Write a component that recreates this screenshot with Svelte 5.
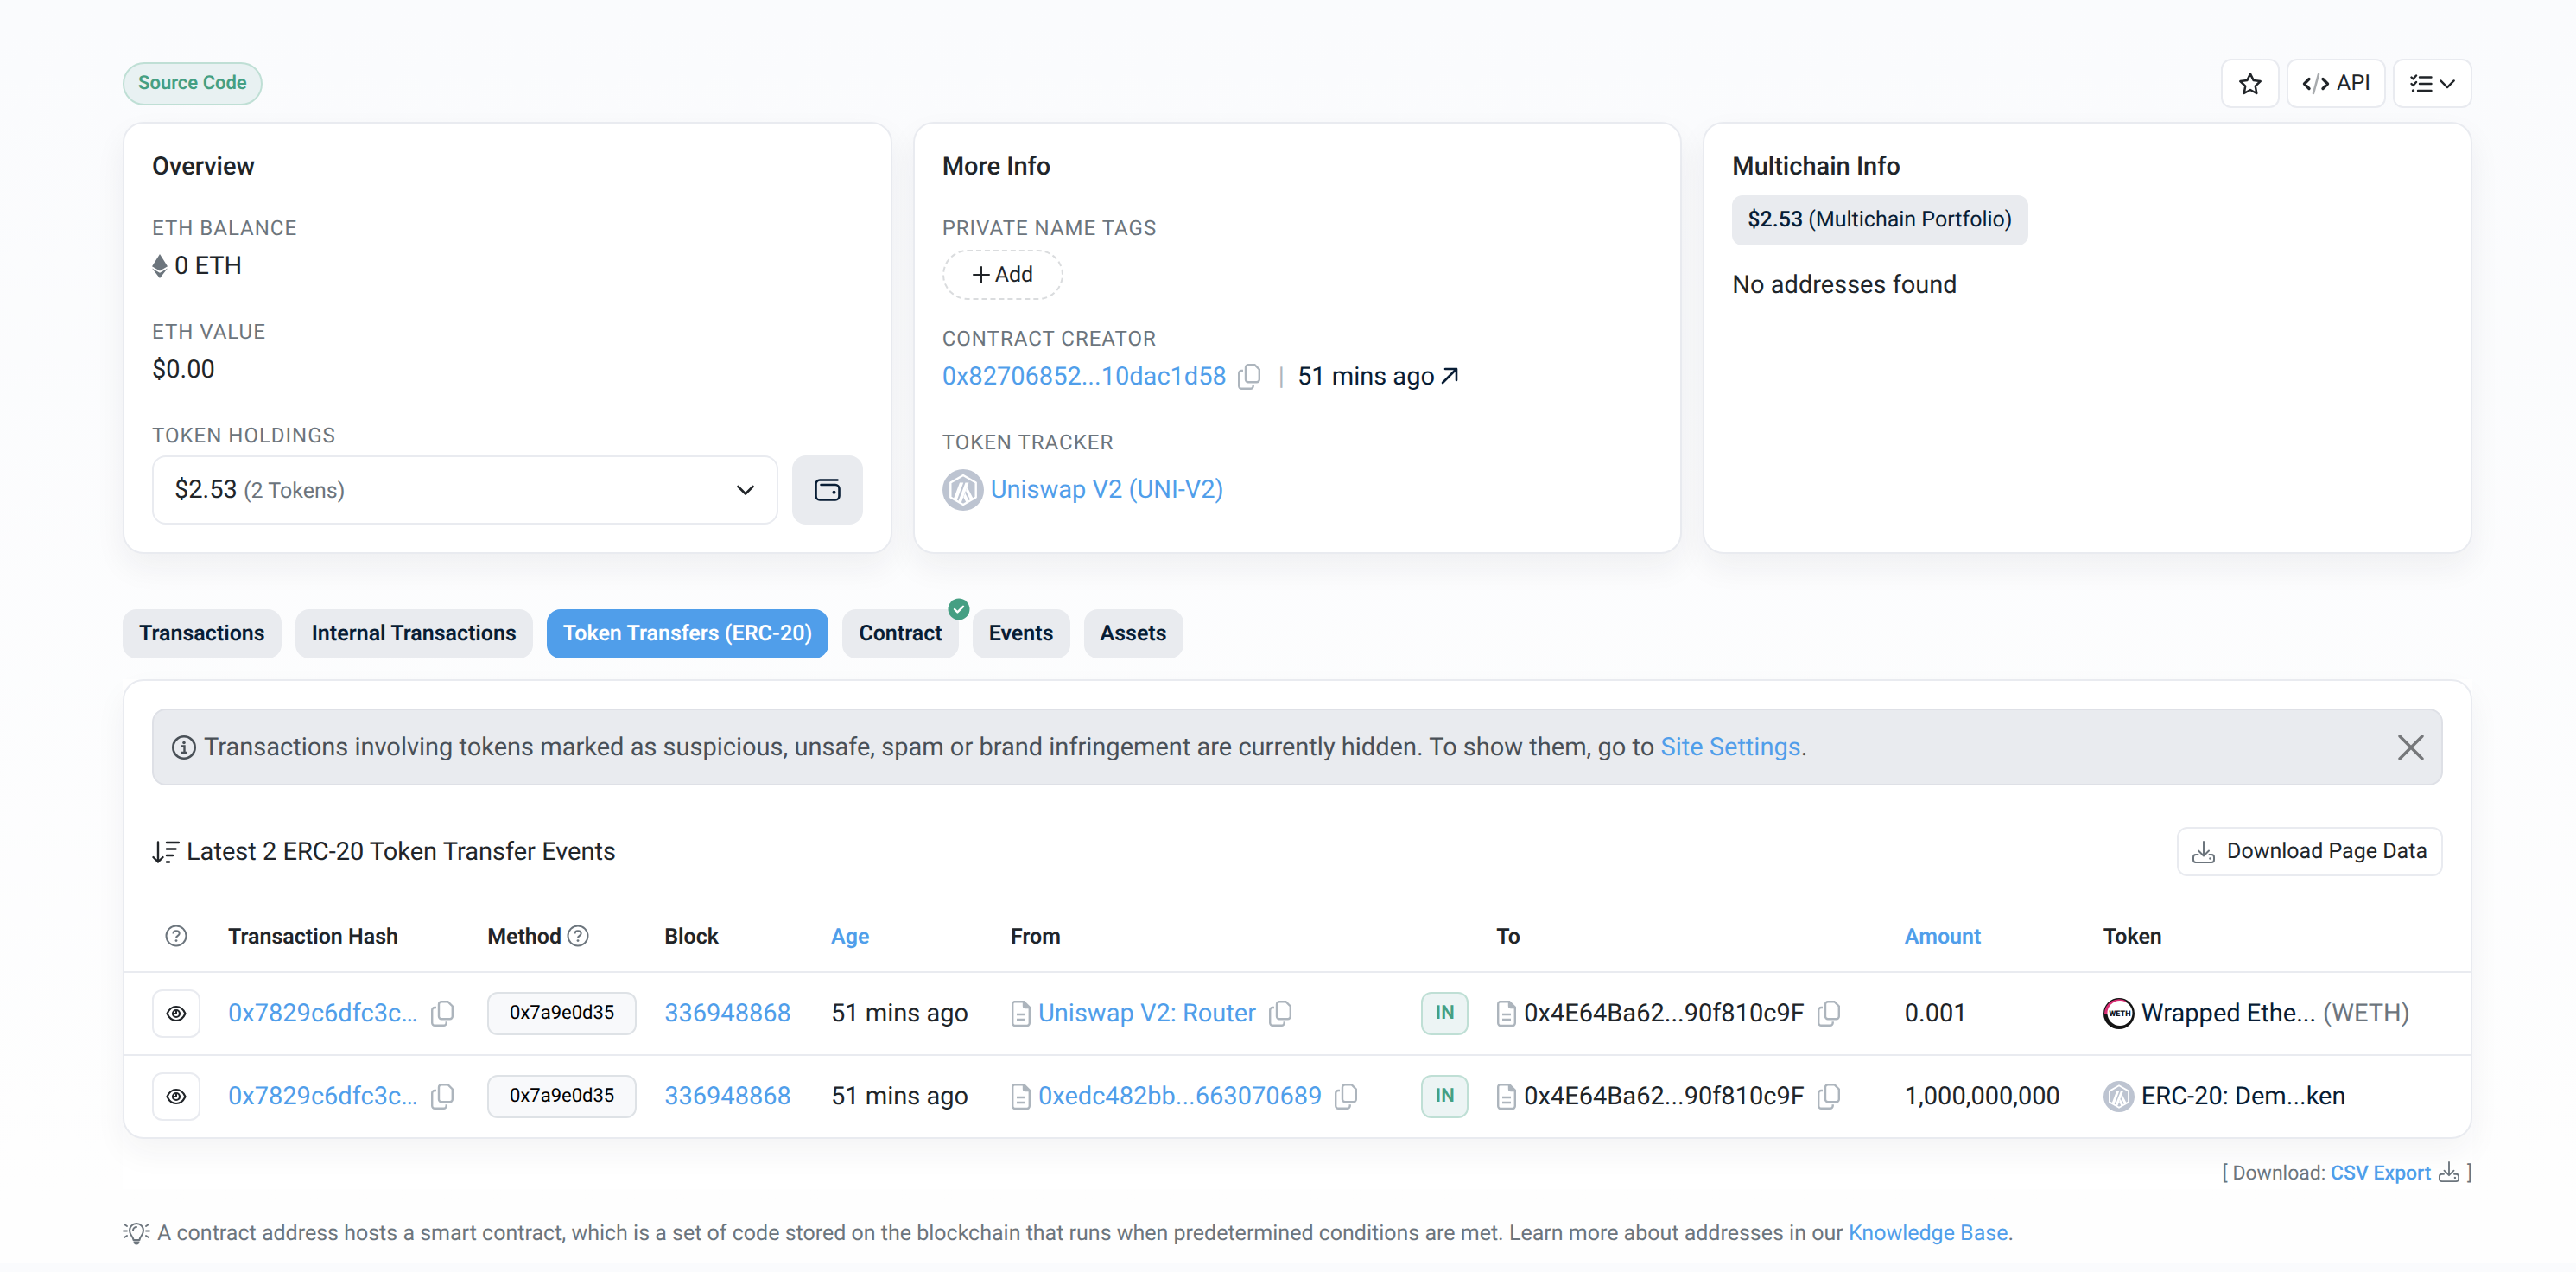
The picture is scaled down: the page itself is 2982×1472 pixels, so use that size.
<script>
	// shared by the table and the "More Info" card
	const LINK_PREFIX = '#/address/';

	const tabs = [
		{ name: 'Transactions' },
		{ name: 'Internal Transactions' },
		{ name: 'Token Transfers (ERC-20)' },
		{ name: 'Contract', verified: true },
		{ name: 'Events' },
		{ name: 'Assets' }
	];

	let activeTab = $state('Token Transfers (ERC-20)');
	let showNotice = $state(true);

	const transfers = [
		{
			hash: '0x7829c6dfc3c…',
			method: '0x7a9e0d35',
			block: '336948868',
			age: '51 mins ago',
			from: 'Uniswap V2: Router',
			to: '0x4E64Ba62...90f810c9F',
			amount: '0.001',
			token: 'Wrapped Ethe...',
			symbol: '(WETH)',
			logo: 'weth'
		},
		{
			hash: '0x7829c6dfc3c…',
			method: '0x7a9e0d35',
			block: '336948868',
			age: '51 mins ago',
			from: '0xedc482bb...663070689',
			to: '0x4E64Ba62...90f810c9F',
			amount: '1,000,000,000',
			token: 'ERC-20: Dem...ken',
			symbol: '',
			logo: 'arb'
		}
	];
</script>

{#snippet copyIcon()}
	<button class="copy" type="button" aria-label="Copy">
		<svg width="26" height="30" viewBox="0 0 26 30" fill="none" stroke="currentColor" stroke-width="2.4">
			<path d="M12 1.200h7.500l5.300 5.300v11.800a3 3 0 0 1-3 3H12a3 3 0 0 1-3-3V4.200a3 3 0 0 1 3-3z" />
			<path d="M6 8H4.200a3 3 0 0 0-3 3v14.800a3 3 0 0 0 3 3h10.500a3 3 0 0 0 3-3v-1.500" />
		</svg>
	</button>
{/snippet}

{#snippet docIcon()}
	<svg class="doc" width="22" height="30" viewBox="0 0 22 30" fill="none" stroke="currentColor" stroke-width="2.4">
		<path d="M4 1.200h10l6.800 6.800v18a3 3 0 0 1-3 3H4.200a3 3 0 0 1-3-3V4a3 3 0 0 1 3-3z" />
		<path d="M14 1v5a2 2 0 0 0 2 2h5z" fill="currentColor" />
		<path d="M6 16h10M6 22h10" />
	</svg>
{/snippet}

{#snippet helpIcon()}
	<svg class="help" width="26" height="26" viewBox="0 0 26 26" fill="none" stroke="currentColor" stroke-width="2">
		<circle cx="13" cy="13" r="11.5" />
		<path d="M9.500 10.500c0-2 1.300-3.300 3.500-3.300s3.700 1.200 3.700 3.100c0 2.400-3.700 2.700-3.700 5" />
		<circle cx="13" cy="18.6" r="1.4" fill="currentColor" stroke="none" />
	</svg>
{/snippet}

{#snippet arbLogo(size)}
	<svg width={size} height={size} viewBox="0 0 48 48">
		<circle cx="24" cy="24" r="24" fill="#bdc4d1" />
		<path d="M24 7l14.700 8.500v17L24 41 9.300 32.500v-17z" fill="none" stroke="#fff" stroke-width="2.400" stroke-linejoin="round" />
		<path d="M20 15.500h4.200L16.400 37l-3.700-2.200zM26.500 15.500h4L22 38l-1.700 1-2.200-1.300z" fill="#fff" />
		<path d="M28.600 20.500l7 13.500-3.200 2-5.400-11zM26.200 27.500l4.800 9.700-3.200 1.800-3.500-6.500z" fill="#fff" />
	</svg>
{/snippet}

{#snippet downloadIcon(size)}
	<svg class="download" width={size} height={size} viewBox="0 0 26 26" fill="none" stroke="currentColor" stroke-width="2" stroke-linecap="round" stroke-linejoin="round">
		<path d="M13 1v16M7 11.500l6 6 6-6" />
		<path d="M6.500 16H4a3 3 0 0 0-3 3v3a3 3 0 0 0 3 3h18a3 3 0 0 0 3-3v-3a3 3 0 0 0-3-3h-2.500" />
		<circle cx="20.5" cy="20.5" r="1.3" fill="currentColor" stroke="none" />
	</svg>
{/snippet}

{#snippet chevron(size)}
	<svg width={size} height={size} viewBox="0 0 20 20" fill="none" stroke="currentColor" stroke-width="2.6" stroke-linecap="round" stroke-linejoin="round">
		<path d="M1.500 6l8.500 8.500L18.500 6" />
	</svg>
{/snippet}

<main>
	<div class="toolbar">
		<a class="source" href="#/code">Source Code</a>
		<div class="tools">
			<button class="btn wide" type="button" aria-label="Add to favourites">
				<svg width="28" height="28" viewBox="0 0 28 28" fill="none" stroke="currentColor" stroke-width="2.5" stroke-linejoin="round">
					<path d="M14 2.500l3.600 7.400 8.100 1.100-5.900 5.700 1.500 8.300L14 21l-7.300 4 1.500-8.300L2.300 11l8.100-1.100z" />
				</svg>
			</button>
			<button class="btn" type="button">
				<svg width="32" height="26" viewBox="0 0 32 26" fill="none" stroke="currentColor" stroke-width="3.4" stroke-linecap="round" stroke-linejoin="round">
					<path d="M8 7.500L2.500 13 8 18.500M24 7.500l5.500 5.500-5.500 5.500" />
					<path d="M19 2l-6 22" stroke="#a8abae" stroke-width="2.6" />
				</svg>
				API
			</button>
			<button class="btn wide" type="button" aria-label="More options">
				<svg width="26" height="22" viewBox="0 0 26 22" fill="none" stroke="currentColor" stroke-width="2.4" stroke-linecap="round" stroke-linejoin="round">
					<path d="M1.500 3.500l2 2 3.500-4M1.500 11l2 2L7 9M11 3.500h13.500M11 11h13.500M9 19h15.500" />
					<circle cx="3.5" cy="19" r="1.7" fill="currentColor" stroke="none" />
				</svg>
				{@render chevron(18)}
			</button>
		</div>
	</div>

	<div class="cards">
		<section class="card">
			<h2>Overview</h2>
			<h3>ETH Balance</h3>
			<p class="value">
				<svg width="18" height="28" viewBox="0 0 18 28" fill="#6c757d">
					<path d="M9 0l9 14.300-9 5.200-9-5.200z" />
					<path d="M0 16.500l9 5.200 9-5.200L9 28z" />
				</svg>
				0 ETH
			</p>
			<h3>ETH Value</h3>
			<p class="value">$0.00</p>
			<h3>Token Holdings</h3>
			<div class="holdings">
				<button class="picker" type="button">
					<span>$2.53 <small>(2 Tokens)</small></span>
					{@render chevron(20)}
				</button>
				<button class="wallet" type="button" aria-label="Open wallet holdings">
					<svg width="30" height="26" viewBox="0 0 30 26" fill="none" stroke="currentColor" stroke-width="2.6" stroke-linecap="round">
						<path d="M26.500 1.500H6A4.500 4.500 0 0 0 1.500 6v14A4.500 4.500 0 0 0 6 24.500h18a4.500 4.500 0 0 0 4.500-4.500v-8.500A4.500 4.500 0 0 0 24 7H7.500" />
						<circle cx="22.5" cy="15.7" r="2" fill="currentColor" stroke="none" />
					</svg>
				</button>
			</div>
		</section>

		<section class="card">
			<h2>More Info</h2>
			<h3>Private Name Tags</h3>
			<button class="add" type="button">
				<svg width="20" height="20" viewBox="0 0 20 20" fill="none" stroke="currentColor" stroke-width="2" stroke-linecap="round">
					<path d="M10 1v18M1 10h18" />
				</svg>
				Add
			</button>
			<h3>Contract Creator</h3>
			<p class="value creator">
				<a href="{LINK_PREFIX}0x82706852">0x82706852...10dac1d58</a>
				{@render copyIcon()}
				<span class="pipe">|</span>
				<a class="dark" href="#/tx">51 mins ago
					<svg width="20" height="20" viewBox="0 0 20 20" fill="none" stroke="currentColor" stroke-width="2.6" stroke-linecap="round" stroke-linejoin="round">
						<path d="M5 2h13v13M18 2L2 18" />
					</svg>
				</a>
			</p>
			<h3>Token Tracker</h3>
			<p class="value tracker">
				{@render arbLogo(48)}
				<a href="#/token/uni-v2">Uniswap V2 (UNI-V2)</a>
			</p>
		</section>

		<section class="card">
			<h2>Multichain Info</h2>
			<a class="portfolio" href="#/portfolio"><b>$2.53</b> (Multichain Portfolio)</a>
			<p class="empty">No addresses found</p>
		</section>
	</div>

	<nav class="tabs">
		{#each tabs as tab}
			<button type="button" class:active={tab.name === activeTab} onclick={() => (activeTab = tab.name)}>
				{tab.name}
				{#if tab.verified}
					<svg class="verified" width="26" height="26" viewBox="0 0 26 26">
						<circle cx="13" cy="13" r="12.5" fill="#459f83" />
						<path d="M8 13l3.400 3.400 6.600-6.600" fill="none" stroke="#fff" stroke-width="2.4" stroke-linecap="round" stroke-linejoin="round" />
					</svg>
				{/if}
			</button>
		{/each}
	</nav>

	<div class="content">
		<section class="panel">
			{#if showNotice}
				<div class="notice">
					<svg width="28" height="28" viewBox="0 0 28 28" fill="none" stroke="currentColor" stroke-width="2.6">
						<circle cx="14" cy="14" r="12.7" />
						<path d="M11 12.500h3.500V20M10.500 20h7" stroke-width="2.4" />
						<circle cx="14" cy="8.5" r="1.8" fill="currentColor" stroke="none" />
					</svg>
					<p>
						Transactions involving tokens marked as suspicious, unsafe, spam or brand infringement are currently hidden. To show them, go to <a href="#/settings">Site Settings</a>.
					</p>
					<button type="button" aria-label="Close" onclick={() => (showNotice = false)}>
						<svg width="30" height="30" viewBox="0 0 30 30" fill="none" stroke="currentColor" stroke-width="3.4" stroke-linecap="round">
							<path d="M2 2l26 26M28 2L2 28" />
						</svg>
					</button>
				</div>
			{/if}

			<div class="heading">
				<p>
					<svg width="32" height="26" viewBox="0 0 32 26" fill="none" stroke="currentColor" stroke-width="2.4" stroke-linecap="round" stroke-linejoin="round">
						<path d="M7 1.500v23M1.500 19L7 24.500l5.500-5.500M17 2h14M17 9.500h10.500M17 17h7M17 24.500h3" />
					</svg>
					Latest 2 ERC-20 Token Transfer Events
				</p>
				<button class="btn" type="button">
					{@render downloadIcon(26)}
					Download Page Data
				</button>
			</div>

			<table>
				<colgroup>
					<col class="c-eye" />
					<col class="c-hash" />
					<col class="c-method" />
					<col class="c-block" />
					<col class="c-age" />
					<col class="c-from" />
					<col class="c-dir" />
					<col class="c-to" />
					<col class="c-amount" />
					<col />
				</colgroup>
				<thead>
					<tr>
						<th class="center">{@render helpIcon()}</th>
						<th>Transaction Hash</th>
						<th>Method {@render helpIcon()}</th>
						<th>Block</th>
						<th><a href="#/age">Age</a></th>
						<th>From</th>
						<th></th>
						<th>To</th>
						<th><a href="#/amount">Amount</a></th>
						<th>Token</th>
					</tr>
				</thead>
				<tbody>
					{#each transfers as t}
						<tr>
							<td>
								<button class="eye" type="button" aria-label="Preview transaction">
									<svg width="24" height="20" viewBox="0 0 24 20" fill="none" stroke="currentColor" stroke-width="2.2">
										<path d="M1.500 10C3.500 5.500 7.300 2 12 2s8.500 3.500 10.500 8c-2 4.500-5.800 8-10.500 8S3.500 14.500 1.500 10z" />
										<circle cx="12" cy="10" r="4" />
										<path d="M12 7v3H9" stroke-width="2" />
									</svg>
								</button>
							</td>
							<td>
								<div class="cell spread">
									<a href="#/tx">{t.hash}</a>
									{@render copyIcon()}
								</div>
							</td>
							<td><span class="method">{t.method}</span></td>
							<td><a href="#/block/{t.block}">{t.block}</a></td>
							<td>{t.age}</td>
							<td>
								<div class="cell">
									{@render docIcon()}
									<a href="{LINK_PREFIX}{t.from}">{t.from}</a>
									{@render copyIcon()}
								</div>
							</td>
							<td><span class="in">IN</span></td>
							<td>
								<div class="cell">
									{@render docIcon()}
									<span>{t.to}</span>
									{@render copyIcon()}
								</div>
							</td>
							<td>{t.amount}</td>
							<td>
								<div class="cell token">
									{#if t.logo === 'weth'}
										<svg width="36" height="36" viewBox="0 0 36 36">
											<circle cx="18" cy="18" r="18" fill="#141414" />
											<path d="M1 18A17 17 0 0 1 26 3.200L18 18z" fill="#d92f74" />
											<circle cx="19" cy="17.5" r="14.5" fill="#fff" />
											<text x="19" y="21" text-anchor="middle">WETH</text>
										</svg>
									{:else}
										{@render arbLogo(36)}
									{/if}
									<a class="dark" href="#/token">{t.token}</a>
									{#if t.symbol}
										<span class="muted">{t.symbol}</span>
									{/if}
								</div>
							</td>
						</tr>
					{/each}
				</tbody>
			</table>
		</section>

		<p class="export">
			[ Download: <a href="#/export">CSV Export</a>
			{@render downloadIcon(24)} ]
		</p>
	</div>

	<p class="hint">
		<svg width="32" height="26" viewBox="0 0 32 26" fill="none" stroke="currentColor" stroke-width="2" stroke-linecap="round">
			<path d="M12.500 20c0-3.500-4.500-6-4.500-11a8 8 0 0 1 16 0c0 5-4.500 7.500-4.500 11z" stroke-linejoin="round" />
			<path d="M12 9a4 4 0 0 1 4-4" />
			<path d="M12.500 21.500h7a3.500 4 0 0 1-7 0z" fill="currentColor" stroke="none" />
			<path d="M1 9.500h4M27 9.500h4M2 2l3 2M30 2l-3 2M2 17l3-2M30 17l-3-2" />
		</svg>
		<span>
			A contract address hosts a smart contract, which is a set of code stored on the blockchain that runs when predetermined conditions are met. Learn more about addresses in our <a href="#/kb">Knowledge Base</a>.
		</span>
	</p>
</main>

<style>
	:global(body) {
		background: linear-gradient(#fafbfd, #fefefe 1400px);
		font-family: Roboto, "Liberation Sans", sans-serif;
		font-size: 29px;
		color: #212529;
		text-rendering: geometricPrecision;
	}

	main {
		padding: 68px 120px 16px 142px;
	}

	h2,
	h3,
	p {
		margin: 0;
	}

	svg {
		flex: none;
	}

	a {
		color: #509eea;
		text-decoration: none;
	}

	a.dark {
		color: #081d35;
	}

	button {
		font-family: inherit;
		color: inherit;
		text-rendering: inherit;
		cursor: pointer;
	}

	.muted {
		color: #6c757d;
	}

	/* top bar */
	.toolbar {
		display: flex;
		align-items: center;
		justify-content: space-between;
		margin-bottom: 16px;
	}

	.source {
		padding: 0 16px;
		line-height: 46px;
		border: 2px solid #bfdfd5;
		border-radius: 25px;
		background: #e8f1f2;
		font-size: 22px;
		font-weight: 600;
		color: #459f83;
	}

	.tools {
		display: flex;
		gap: 8px;
	}

	.btn {
		display: flex;
		align-items: center;
		justify-content: center;
		gap: 8px;
		height: 57px;
		padding: 0 16px;
		border: 2px solid #e9ebf0;
		border-radius: 12px;
		background: #fff;
		font-size: 25px;
	}

	.btn.wide {
		padding: 0 18px;
	}

	/* info cards */
	.cards {
		display: grid;
		grid-template-columns: repeat(3, 1fr);
		gap: 24px;
	}

	.card {
		display: flex;
		flex-direction: column;
		align-items: flex-start;
		padding: 32px;
		border: 2px solid #e9ebf0;
		border-radius: 24px;
		background: #fff;
		box-shadow: 0 16px 36px rgba(30, 34, 50, 0.06);
	}

	h2 {
		margin-bottom: 15px;
		font-size: 29px;
		line-height: 36px;
		font-weight: 500;
	}

	h3 {
		font-size: 24px;
		line-height: 38px;
		font-weight: 400;
		letter-spacing: 1px;
		text-transform: uppercase;
		color: #6c757d;
	}

	h2 + h3 {
		margin-top: 19px;
	}

	.value {
		display: flex;
		align-items: center;
		gap: 8px;
		height: 50px;
		margin-bottom: 32px;
	}

	.value.tracker {
		margin: 11px 0 0;
	}

	.holdings {
		display: flex;
		gap: 16px;
		width: 100%;
		margin-top: 4px;
	}

	.picker {
		display: flex;
		flex: 1;
		align-items: center;
		justify-content: space-between;
		height: 80px;
		padding: 0 26px 0 24px;
		border: 2px solid #e9ebf0;
		border-radius: 16px;
		background: #fff;
		font-size: 29px;
	}

	.picker small {
		font-size: 25px;
		color: #6c757d;
	}

	.wallet {
		display: grid;
		place-items: center;
		width: 82px;
		height: 80px;
		border: 0;
		border-radius: 16px;
		background: #e9ebef;
		color: #081d35;
	}

	.add {
		display: flex;
		align-items: center;
		gap: 6px;
		height: 58px;
		margin: 6px 0 26px;
		padding: 0 33px;
		border: 2px dashed #dadcde;
		border-radius: 29px;
		background: none;
		font-size: 25px;
	}

	.copy {
		display: flex;
		padding: 0;
		border: 0;
		background: none;
		color: #adb5bd;
	}

	.creator .copy {
		margin: 0 13px 0 5px;
	}

	.pipe {
		margin-right: 7px;
		color: #adb5bd;
	}

	.portfolio {
		padding: 0 18px;
		border-radius: 12px;
		background: #e9ebef;
		font-size: 25px;
		line-height: 58px;
		color: #081d35;
	}

	.portfolio b {
		font-weight: 500;
	}

	.empty {
		margin-top: 28px;
		line-height: 36px;
	}

	/* tabs */
	.tabs {
		display: flex;
		flex-wrap: wrap;
		gap: 16px;
		margin: 64px 0 24px;
	}

	.tabs button {
		position: relative;
		height: 57px;
		padding: 0 19px;
		border: 0;
		border-radius: 16px;
		background: #e9ebef;
		font-size: 25px;
		font-weight: 600;
		color: #081d35;
	}

	.tabs button.active {
		background: #509eea;
		color: #fff;
	}

	.verified {
		position: absolute;
		top: -13px;
		right: -13px;
	}

	/* transfers */
	.content {
		background: #fff;
	}

	.panel {
		border: 2px solid #e9ebf0;
		border-radius: 24px;
		background: #fff;
		box-shadow: 0 16px 36px rgba(30, 34, 50, 0.05);
	}

	.notice {
		display: flex;
		align-items: center;
		gap: 9px;
		height: 85px;
		margin: 32px 32px 48px;
		padding: 0 20px 0 21px;
		border: 2px solid #dee0e6;
		border-radius: 16px;
		background: #e9ebef;
		color: #495057;
	}

	.notice button {
		display: flex;
		margin-left: auto;
		padding: 0;
		border: 0;
		background: none;
		color: #75777a;
	}

	.heading {
		display: flex;
		align-items: center;
		justify-content: space-between;
		padding: 0 32px;
	}

	.heading p {
		display: flex;
		align-items: center;
		gap: 8px;
	}

	.heading .btn {
		gap: 14px;
	}

	.download,
	.help {
		color: #6c757d;
	}

	table {
		width: 100%;
		margin-top: 30px;
		border-collapse: collapse;
		table-layout: fixed;
	}

	.c-eye { width: 3.83%; }
	.c-hash { width: 11.05%; }
	.c-method { width: 7.55%; }
	.c-block { width: 7.1%; }
	.c-age { width: 7.66%; }
	.c-from { width: 17.5%; }
	.c-dir { width: 3.2%; }
	.c-to { width: 17.4%; }
	.c-amount { width: 8.47%; }

	th,
	td {
		padding: 0 16px;
		text-align: left;
		white-space: nowrap;
	}

	th:first-child,
	td:first-child {
		padding-left: 32px;
	}

	th {
		height: 80px;
		font-size: 25px;
		font-weight: 600;
	}

	th.center {
		text-align: center;
	}

	.help {
		vertical-align: -4px;
	}

	td {
		height: 94px;
		border-top: 2px solid #e9ebf0;
	}

	.cell {
		display: flex;
		align-items: center;
		gap: 8px;
	}

	.cell .copy {
		margin-left: 7px;
	}

	.spread {
		justify-content: space-between;
		padding-right: 8px;
	}

	.doc {
		margin: 0 1px;
		color: #adb5bd;
	}

	.eye {
		display: grid;
		place-items: center;
		width: 56px;
		height: 56px;
		padding: 0;
		border: 2px solid #e9ebf0;
		border-radius: 12px;
		background: #fff;
	}

	.method,
	.in {
		display: block;
		box-sizing: border-box;
		height: 50px;
		border: 2px solid #dee2e6;
		border-radius: 12px;
		background: #f8f9fb;
		font-size: 22px;
		line-height: 46px;
		text-align: center;
		color: #000;
	}

	.in {
		border-color: #bfdfd5;
		background: #ecf4f4;
		font-weight: 600;
		color: #459f83;
	}

	.token text {
		font-size: 9px;
		font-weight: 900;
		fill: #141414;
	}

	.export {
		padding-top: 22px;
		font-size: 23px;
		line-height: 36px;
		text-align: right;
		color: #6c757d;
	}

	.export a {
		font-weight: 500;
	}

	.export .download {
		margin: 0 3px;
		vertical-align: -3px;
	}

	.hint {
		display: flex;
		align-items: center;
		gap: 8px;
		margin-top: 34px;
		font-size: 25px;
		line-height: 36px;
		color: #6c757d;
	}
</style>
